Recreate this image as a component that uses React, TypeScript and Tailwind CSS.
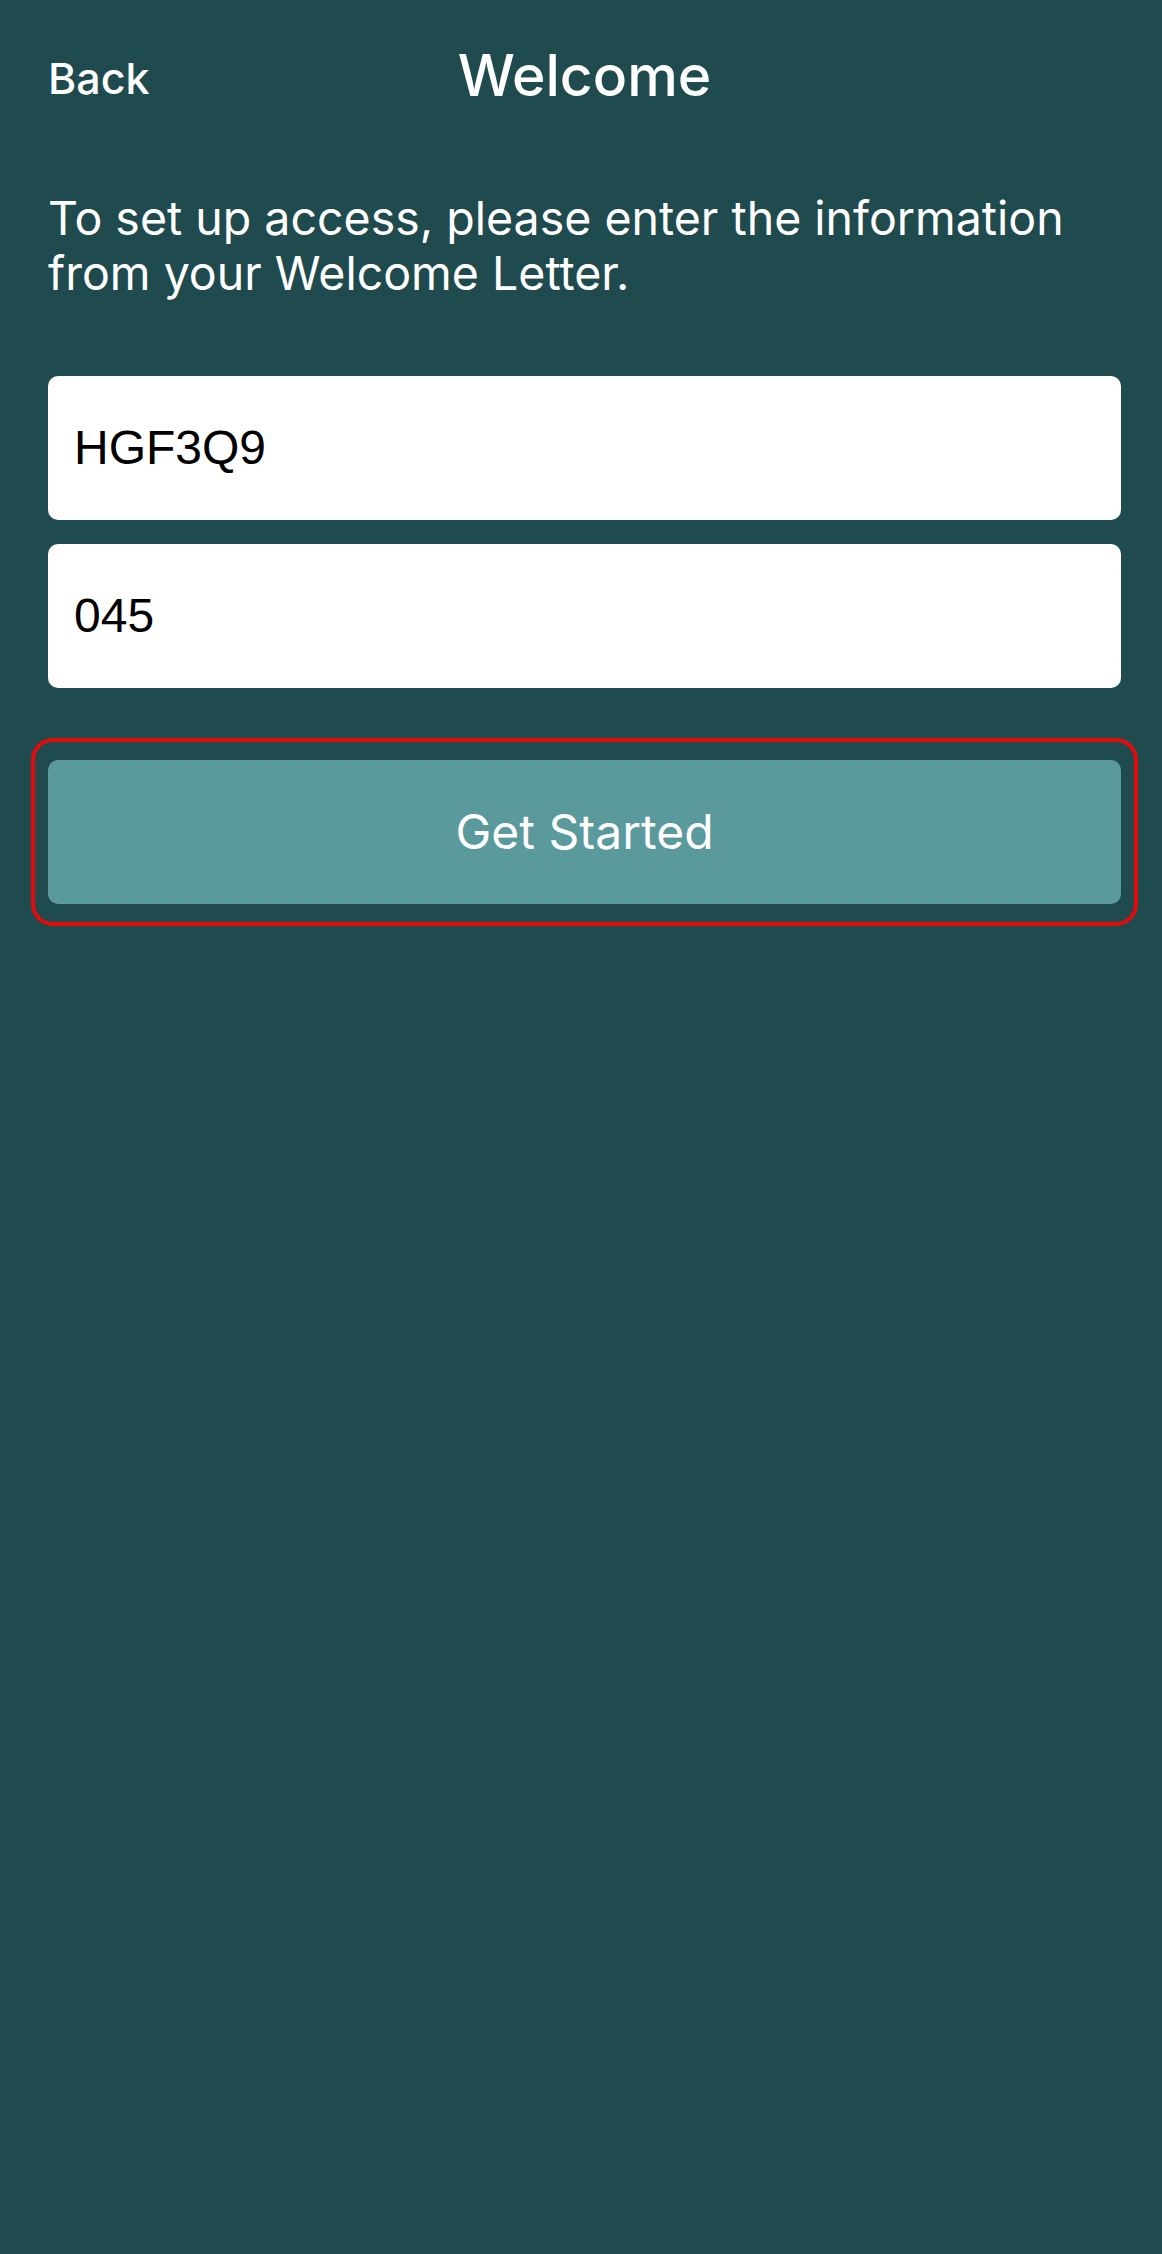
const fields = ["HGF3Q9", "045"];

export default function App() {
  return (
    <div
      className="min-h-[2254px] w-full bg-[#1f4a4e] pl-[48px] pr-[41px]"
      style={{ fontFamily: "Inter, 'Liberation Sans', sans-serif" }}
    >
      <header className="grid grid-cols-[1fr_auto_1fr] items-end pt-[46px]">
        <button className="justify-self-start text-[43px] font-medium leading-[56px] text-white">
          Back
        </button>
        <h1 className="text-[57px] font-medium leading-[60px] text-white">Welcome</h1>
        <div />
      </header>

      <p className="mt-[85px] text-[46.5px] leading-[55px] text-white">
        To set up access, please enter the information from your Welcome Letter.
      </p>

      <div className="mt-[75px] flex flex-col gap-[24px]">
        {fields.map((value) => (
          <div
            key={value}
            className="flex h-[144px] items-center rounded-[10px] bg-white px-[26px] text-[48px] text-black"
            style={{ fontFamily: "'Liberation Sans', Arial, sans-serif" }}
          >
            {value}
          </div>
        ))}
      </div>

      <div className="mt-[50px] -ml-[17px] -mr-[17px] rounded-[22px] border-4 border-[#e20a0a] px-[13px] py-[18px]">
        <button className="flex h-[144px] w-full items-center justify-center rounded-[10px] bg-[#5a9a9c] text-[48px] text-white">
          Get Started
        </button>
      </div>
    </div>
  );
}
